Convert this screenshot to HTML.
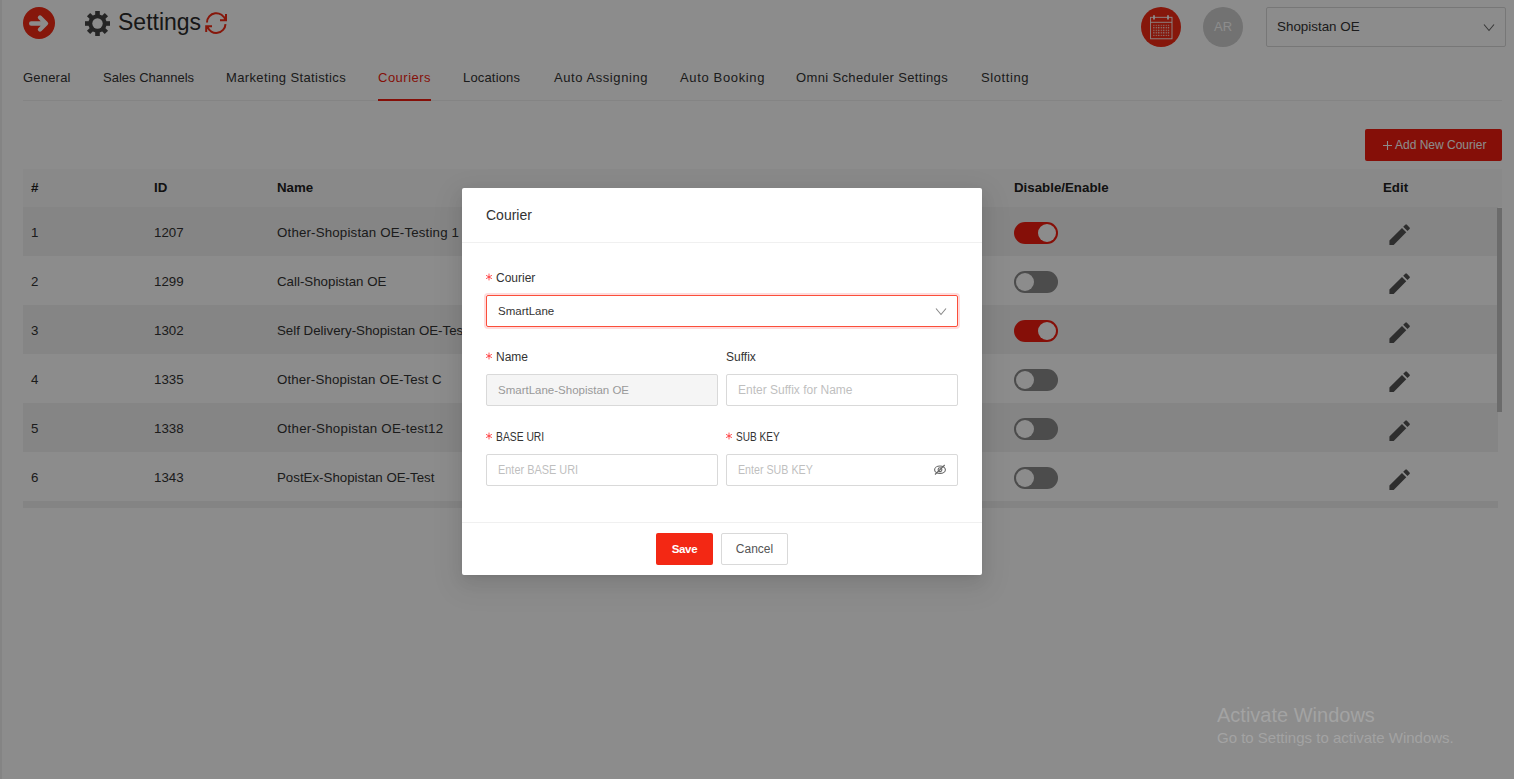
<!DOCTYPE html>
<html><head><meta charset="utf-8">
<style>
*{box-sizing:border-box;margin:0;padding:0}
html,body{width:1514px;height:779px;overflow:hidden;background:#fff;font-family:"Liberation Sans",sans-serif;color:#333}
.a{position:absolute;white-space:nowrap}
.tab{position:absolute;top:70px;font-size:13px;color:#333;line-height:16px}
.hd{position:absolute;top:180px;font-size:13.3px;font-weight:bold;color:#222;line-height:16px}
.row{position:absolute;left:23px;width:1475px;height:49px}
.cell{position:absolute;font-size:13.3px;color:#333;line-height:16px;top:18px}
.tg{position:absolute;left:991px;top:15px;width:44px;height:22px;border-radius:11px;background:#8a8a8a}
.tg i{position:absolute;top:2px;left:2px;width:18px;height:18px;border-radius:50%;background:#fff}
.tg.on{background:#f21d0f}
.tg.on i{left:24px}
.ed{position:absolute;left:1362.6px;top:13.6px}
#mask{position:absolute;left:0;top:0;width:1514px;height:779px;background:rgba(0,0,0,0.45)}
#modal{position:absolute;left:462px;top:188px;width:520px;height:387px;background:#fff;border-radius:2px;box-shadow:0 3px 6px -4px rgba(0,0,0,.12),0 6px 16px 0 rgba(0,0,0,.08),0 9px 28px 8px rgba(0,0,0,.05)}
.lbl{position:absolute;font-size:12px;color:#333;line-height:14px}
.req{display:inline-block;width:10px;height:10px}
.inp{position:absolute;height:32px;border:1px solid #d9d9d9;border-radius:2px;font-size:12px;line-height:30px;padding-left:11px;color:#bfbfbf}
.win{position:absolute;color:#a3a3a3;font-family:"Liberation Sans",sans-serif}
</style></head><body>
<!-- left edge stripe -->
<div class="a" style="left:0;top:0;width:2px;height:779px;background:#f0f0f0"></div>

<!-- header -->
<div class="a" style="left:23px;top:7px;width:32px;height:32px;border-radius:50%;background:#f42a14"></div>
<svg class="a" style="left:23px;top:7px" width="32" height="32" viewBox="0 0 32 32"><path d="M8.2 16.5H22.5M17 10.5L23 16.5L17 22.5" stroke="#fff" stroke-width="4.4" fill="none" stroke-linecap="round" stroke-linejoin="round"/></svg>

<svg class="a" style="left:85px;top:11px" width="25" height="25" viewBox="-12.5 -12.5 25 25"><g fill="#444"><circle r="9.2"/><g id="tt"><rect x="-2.3" y="-12.6" width="4.6" height="5"/><rect x="-2.3" y="7.6" width="4.6" height="5"/><rect x="-12.6" y="-2.3" width="5" height="4.6"/><rect x="7.6" y="-2.3" width="5" height="4.6"/></g><use href="#tt" transform="rotate(45)"/></g><circle r="5.2" fill="#fff"/></svg>
<div class="a" style="left:118px;top:8px;font-size:23px;line-height:26px;color:#2b2b2b;top:9px">Settings</div>
<svg class="a" style="left:204px;top:10px" width="24" height="26" viewBox="0 0 24 26"><path d="M3 12.5A9.3 9.3 0 0 1 21.3 10.1M21.5 14.1A9.3 9.3 0 0 1 3.4 16.6M22 4V10.3H16M2.2 22V16.3H8" stroke="#f42a14" stroke-width="2" fill="none"/></svg>

<div class="a" style="left:1141px;top:7px;width:40px;height:40px;border-radius:50%;background:#f42a14"></div>
<svg class="a" style="left:1150px;top:15px" width="23" height="25" viewBox="0 0 23 25"><defs><pattern id="dots" width="2.5" height="2.55" patternUnits="userSpaceOnUse" x="3.2" y="9.6"><rect width="1.2" height="1.2" fill="#fff"/></pattern></defs><rect x="0.6" y="2.3" width="21.4" height="21.5" fill="none" stroke="#fff" stroke-width="0.9"/><path d="M0.6 7.3h21.4" stroke="#fff" stroke-width="0.9"/><path d="M4 0.2v4.4M18 0.2v4.4" stroke="#fff" stroke-width="1.8"/><rect x="3.2" y="9.6" width="16.2" height="11.5" fill="url(#dots)"/></svg>

<div class="a" style="left:1203px;top:7px;width:40px;height:40px;border-radius:50%;background:#cfcfcf"></div>
<div class="a" style="left:1203px;top:19px;width:40px;text-align:center;font-size:13px;line-height:16px;color:#fff">AR</div>

<div class="a" style="left:1266px;top:7px;width:240px;height:40px;border:1px solid #d9d9d9;border-radius:2px"></div>
<div class="a" style="left:1277px;top:19px;font-size:13.4px;line-height:16px;color:#333">Shopistan OE</div>
<svg class="a" style="left:1483px;top:23px" width="12" height="9" viewBox="0 0 12 9"><path d="M1 1.5l5 6 5-6" stroke="#666" stroke-width="1.1" fill="none"/></svg>

<!-- tabs -->
<div class="tab" style="left:23px;letter-spacing:0.2px">General</div>
<div class="tab" style="left:103px;letter-spacing:0px">Sales Channels</div>
<div class="tab" style="left:226px;letter-spacing:0.37px">Marketing Statistics</div>
<div class="tab" style="left:378px;color:#f21d0f;letter-spacing:0.5px">Couriers</div>
<div class="tab" style="left:463px;letter-spacing:0.17px">Locations</div>
<div class="tab" style="left:554px;letter-spacing:0.57px">Auto Assigning</div>
<div class="tab" style="left:680px;letter-spacing:0.65px">Auto Booking</div>
<div class="tab" style="left:796px;letter-spacing:0.36px">Omni Scheduler Settings</div>
<div class="tab" style="left:981px;letter-spacing:0.6px">Slotting</div>
<div class="a" style="left:23px;top:100px;width:1479px;height:1px;background:#f0f0f0"></div>
<div class="a" style="left:378px;top:99px;width:53px;height:2px;background:#f21d0f"></div>

<!-- add button -->
<div class="a" style="left:1365px;top:129px;width:137px;height:32px;background:#f21d0f;border-radius:2px"></div><svg class="a" style="left:1383px;top:141px" width="9" height="9" viewBox="0 0 9 9"><path d="M4.5 0V9M0 4.5H9" stroke="#fff" stroke-width="1.1"/></svg><div class="a" style="left:1395px;top:137px;font-size:12px;line-height:16px;color:#fff">Add New Courier</div>

<!-- table -->
<div class="a" style="left:23px;top:169px;width:1479px;height:38px;background:#fafafa"></div>
<div class="hd" style="left:31px">#</div>
<div class="hd" style="left:154px">ID</div>
<div class="hd" style="left:277px">Name</div>
<div class="hd" style="left:1014px">Disable/Enable</div>
<div class="hd" style="left:1383px">Edit</div>

<div class="row" style="top:207px;background:#f2f2f2"><div class="cell" style="left:8px">1</div><div class="cell" style="left:131px">1207</div><div class="cell" style="left:254px;letter-spacing:0.17px">Other-Shopistan OE-Testing 1</div><div class="tg on"><i></i></div><div class="ed"><svg width="27.3" height="27.3" viewBox="0 0 24 24"><path fill="#555" d="M3 17.25V21h3.75L17.81 9.94l-3.75-3.75L3 17.25zM20.71 7.04a1 1 0 0 0 0-1.41l-2.34-2.34a1 1 0 0 0-1.41 0l-1.83 1.83 3.75 3.75 1.83-1.83z"/></svg></div></div>
<div class="row" style="top:256px;background:#fff"><div class="cell" style="left:8px">2</div><div class="cell" style="left:131px">1299</div><div class="cell" style="left:254px">Call-Shopistan OE</div><div class="tg"><i></i></div><div class="ed"><svg width="27.3" height="27.3" viewBox="0 0 24 24"><path fill="#555" d="M3 17.25V21h3.75L17.81 9.94l-3.75-3.75L3 17.25zM20.71 7.04a1 1 0 0 0 0-1.41l-2.34-2.34a1 1 0 0 0-1.41 0l-1.83 1.83 3.75 3.75 1.83-1.83z"/></svg></div></div>
<div class="row" style="top:305px;background:#f2f2f2"><div class="cell" style="left:8px">3</div><div class="cell" style="left:131px">1302</div><div class="cell" style="left:254px">Self Delivery-Shopistan OE-Test</div><div class="tg on"><i></i></div><div class="ed"><svg width="27.3" height="27.3" viewBox="0 0 24 24"><path fill="#555" d="M3 17.25V21h3.75L17.81 9.94l-3.75-3.75L3 17.25zM20.71 7.04a1 1 0 0 0 0-1.41l-2.34-2.34a1 1 0 0 0-1.41 0l-1.83 1.83 3.75 3.75 1.83-1.83z"/></svg></div></div>
<div class="row" style="top:354px;background:#fff"><div class="cell" style="left:8px">4</div><div class="cell" style="left:131px">1335</div><div class="cell" style="left:254px;letter-spacing:0.12px">Other-Shopistan OE-Test C</div><div class="tg"><i></i></div><div class="ed"><svg width="27.3" height="27.3" viewBox="0 0 24 24"><path fill="#555" d="M3 17.25V21h3.75L17.81 9.94l-3.75-3.75L3 17.25zM20.71 7.04a1 1 0 0 0 0-1.41l-2.34-2.34a1 1 0 0 0-1.41 0l-1.83 1.83 3.75 3.75 1.83-1.83z"/></svg></div></div>
<div class="row" style="top:403px;background:#f2f2f2"><div class="cell" style="left:8px">5</div><div class="cell" style="left:131px">1338</div><div class="cell" style="left:254px;letter-spacing:0.24px">Other-Shopistan OE-test12</div><div class="tg"><i></i></div><div class="ed"><svg width="27.3" height="27.3" viewBox="0 0 24 24"><path fill="#555" d="M3 17.25V21h3.75L17.81 9.94l-3.75-3.75L3 17.25zM20.71 7.04a1 1 0 0 0 0-1.41l-2.34-2.34a1 1 0 0 0-1.41 0l-1.83 1.83 3.75 3.75 1.83-1.83z"/></svg></div></div>
<div class="row" style="top:452px;background:#fff"><div class="cell" style="left:8px">6</div><div class="cell" style="left:131px">1343</div><div class="cell" style="left:254px">PostEx-Shopistan OE-Test</div><div class="tg"><i></i></div><div class="ed"><svg width="27.3" height="27.3" viewBox="0 0 24 24"><path fill="#555" d="M3 17.25V21h3.75L17.81 9.94l-3.75-3.75L3 17.25zM20.71 7.04a1 1 0 0 0 0-1.41l-2.34-2.34a1 1 0 0 0-1.41 0l-1.83 1.83 3.75 3.75 1.83-1.83z"/></svg></div></div>

<div class="a" style="left:23px;top:501px;width:1475px;height:7px;background:#f0f0f0"></div>
<div class="a" style="left:1497px;top:208px;width:5px;height:204px;background:#c4c4c4"></div>

<div id="mask"></div>

<div id="modal">
  <div class="a" style="left:24px;top:19px;font-size:14px;line-height:16px;color:#333">Courier</div>
  <div class="a" style="left:0;top:54px;width:520px;height:1px;background:#f0f0f0"></div>

  <div class="lbl" style="left:24px;top:83px"><span class="req"><svg style="position:absolute;left:-1px;top:2px" width="8" height="8" viewBox="-4 -4 8 8"><path d="M0 -3V3M-2.6 -1.5L2.6 1.5M-2.6 1.5L2.6 -1.5" stroke="#ff4d4f" stroke-width="0.95" stroke-linecap="round"/><circle r="1" fill="#ff4d4f"/></svg></span>Courier</div>
  <div class="inp" style="left:24px;top:107px;width:472px;border-color:#fb4e3a;color:#333;font-size:11.5px;box-shadow:0 0 0 2px rgba(255,77,79,.2)">SmartLane</div>
  <svg class="a" style="left:473px;top:119px" width="12" height="9" viewBox="0 0 12 9"><path d="M1 1.5l5 6 5-6" stroke="#888" stroke-width="1.1" fill="none"/></svg>

  <div class="lbl" style="left:24px;top:162px"><span class="req"><svg style="position:absolute;left:-1px;top:2px" width="8" height="8" viewBox="-4 -4 8 8"><path d="M0 -3V3M-2.6 -1.5L2.6 1.5M-2.6 1.5L2.6 -1.5" stroke="#ff4d4f" stroke-width="0.95" stroke-linecap="round"/><circle r="1" fill="#ff4d4f"/></svg></span>Name</div>
  <div class="lbl" style="left:264px;top:162px">Suffix</div>
  <div class="inp" style="left:24px;top:186px;width:232px;background:#f5f5f5;color:#999;font-size:11.5px">SmartLane-Shopistan OE</div>
  <div class="inp" style="left:264px;top:186px;width:232px">Enter Suffix for Name</div>

  <div class="lbl" style="left:24px;top:242px"><span class="req"><svg style="position:absolute;left:-1px;top:2px" width="8" height="8" viewBox="-4 -4 8 8"><path d="M0 -3V3M-2.6 -1.5L2.6 1.5M-2.6 1.5L2.6 -1.5" stroke="#ff4d4f" stroke-width="0.95" stroke-linecap="round"/><circle r="1" fill="#ff4d4f"/></svg></span><span style="display:inline-block;transform:scaleX(0.86);transform-origin:0 0">BASE URI</span></div>
  <div class="lbl" style="left:264px;top:242px"><span class="req"><svg style="position:absolute;left:-1px;top:2px" width="8" height="8" viewBox="-4 -4 8 8"><path d="M0 -3V3M-2.6 -1.5L2.6 1.5M-2.6 1.5L2.6 -1.5" stroke="#ff4d4f" stroke-width="0.95" stroke-linecap="round"/><circle r="1" fill="#ff4d4f"/></svg></span><span style="display:inline-block;transform:scaleX(0.84);transform-origin:0 0">SUB KEY</span></div>
  <div class="inp" style="left:24px;top:266px;width:232px"><span style="display:inline-block;transform:scaleX(0.91);transform-origin:0 0">Enter BASE URI</span></div>
  <div class="inp" style="left:264px;top:266px;width:232px"><span style="display:inline-block;transform:scaleX(0.89);transform-origin:0 0">Enter SUB KEY</span></div><svg class="a" style="left:471px;top:275px" width="14" height="13" viewBox="0 0 14 13"><ellipse cx="7" cy="6.7" rx="5.4" ry="3.7" fill="none" stroke="#666" stroke-width="1.1"/><circle cx="7" cy="6.7" r="1.9" fill="none" stroke="#666" stroke-width="1.1"/><path d="M2 11.5L11.7 2" stroke="#666" stroke-width="1.1"/></svg>

  <div class="a" style="left:0;top:334px;width:520px;height:1px;background:#f0f0f0"></div>
  <div class="a" style="left:194px;top:345px;width:57px;height:32px;background:#f32814;border-radius:2px;color:#fff;font-size:11.5px;font-weight:bold;letter-spacing:-0.3px;line-height:32px;text-align:center">Save</div>
  <div class="a" style="left:259px;top:345px;width:67px;height:32px;border:1px solid #d9d9d9;border-radius:2px;color:#555;font-size:12px;line-height:30px;text-align:center">Cancel</div>
</div>

<div class="win" style="left:1217px;top:703px;font-size:20px;line-height:24px">Activate Windows</div>
<div class="win" style="left:1217px;top:729px;font-size:15px;line-height:18px">Go to Settings to activate Windows.</div>
</body></html>
